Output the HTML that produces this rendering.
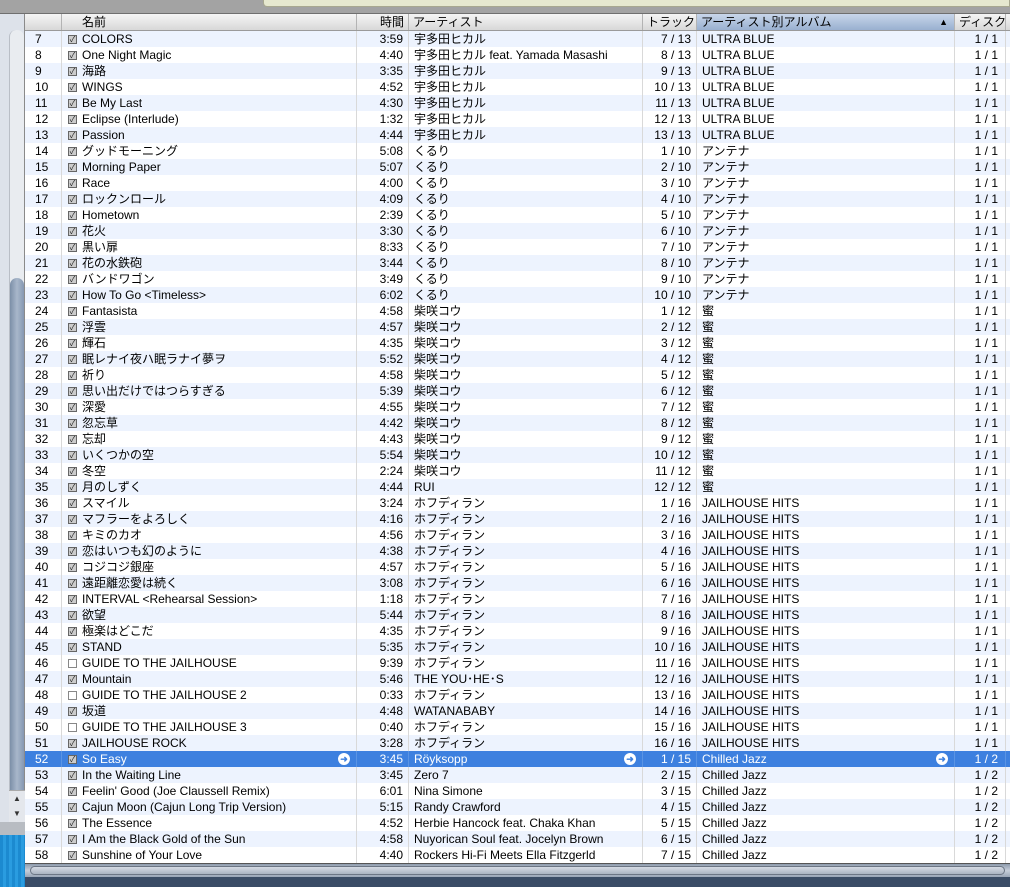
<!DOCTYPE html><html><head><meta charset="utf-8"><style>
*{margin:0;padding:0;box-sizing:border-box}
body{width:1010px;height:887px;overflow:hidden;background:#fff;font-family:"Liberation Sans","Noto Sans CJK JP",sans-serif;font-size:12px;color:#000;position:relative}
#top{position:absolute;left:0;top:0;width:1010px;height:14px;background:#a3a3a3;border-bottom:1px solid #6f6f6f}
#yel{position:absolute;left:263px;top:0;width:747px;height:7px;background:#e6e8cf;border:1px solid #a8a890;border-top:none;border-radius:0 0 0 4px}
#side{position:absolute;left:0;top:14px;width:25px;height:820px;background:#dde2ea;border-right:1px solid #8a8a8a}
#track{position:absolute;left:9px;top:16px;width:15px;height:775px;background:#e9ecf0;border-left:1px solid #b9bec6;border-radius:7px 7px 0 0}
#thumb{position:absolute;left:10px;top:264px;width:14px;height:528px;background:linear-gradient(90deg,#7c8fa8,#a8b7ca,#8598b2);border-radius:7px}
#arr{position:absolute;left:9px;top:790px;width:16px;height:32px;background:#e4e7ec;border-top:1px solid #aaa;font-size:8px;color:#333;text-align:center;line-height:15px}
#sbar{position:absolute;left:0;top:822px;width:25px;height:13px;background:#b8bcc2}
#blue{position:absolute;left:0;top:835px;width:25px;height:52px;background:repeating-linear-gradient(90deg,#1c8ad0 0 3px,#2a9ce0 3px 6px)}
#hdr{position:absolute;left:25px;top:14px;width:985px;height:17px;background:linear-gradient(#f5f5f5,#d8d8d8);border-bottom:1px solid #9a9a9a;display:flex}
#hdr div{height:16px;line-height:16px;border-right:1px solid #b3b3b3;padding:0 4px;white-space:nowrap;overflow:hidden}
#rows{position:absolute;left:25px;top:31px;width:985px}
.r{height:16px;line-height:16px;display:flex;white-space:nowrap}
.r:nth-child(odd){background:#edf3fe}
.r>div{height:16px;border-right:1px solid #d9d9d9;overflow:hidden;padding:0 4px;position:relative}
.r.s{background:#3d80df!important;color:#fff}
.r.s>div{border-right-color:#5a94e4}
.c1{width:37px;padding-left:10px!important}
.c2{width:295px;padding-left:6px!important}
.c3{width:52px;text-align:right;padding-right:5px!important}
.c4{width:234px;padding-left:5px!important}
.c5{width:54px;text-align:right;padding-right:5px!important}
.c6{width:258px;padding-left:5px!important}
.c7{width:51px;text-align:right;padding-right:7px!important}
.cb{display:inline-block;width:9px;height:9px;border:1px solid #666;background:#ccc;vertical-align:0;margin-right:5px;font-size:8px;line-height:7px;text-align:center;color:#222;position:relative;top:-1px}
.cb.u{background:#fff;color:transparent;border-color:#888}
.go{position:absolute;right:6px;top:2px;width:12px;height:12px;border-radius:6px;background:#fff;color:#3d80df;font-size:9px;line-height:12px;text-align:center;font-weight:bold}
#hs{position:absolute;left:25px;top:863px;width:985px;height:14px;background:linear-gradient(#8e9bad,#c6ceda,#98a5b6);border-top:1px solid #555}
#hs div{position:absolute;left:5px;top:2px;width:975px;height:9px;border-radius:5px;background:linear-gradient(#d5dbe4,#aab4c2);border:1px solid #6c7685}
#bot{position:absolute;left:25px;top:877px;width:985px;height:10px;background:#3a4c66}
</style></head><body>
<div id="top"><div id="yel"></div></div>
<div id="side"><div id="track"></div><div id="thumb"></div></div>
<div id="arr" style="position:absolute">▲<br>▼</div>
<div id="sbar"></div><div id="blue"></div>
<div id="hdr"><div style="width:37px"></div><div style="width:295px;padding-left:20px">名前</div><div style="width:52px;text-align:right">時間</div><div style="width:234px">アーティスト</div><div style="width:54px;text-align:right">トラック</div><div style="width:258px;background:linear-gradient(#c8d6ea,#99b0d0);position:relative">アーティスト別アルバム<span style="position:absolute;right:6px;font-size:9px">▲</span></div><div style="width:51px;text-align:right">ディスク</div></div>
<div id="rows">
<div class="r"><div class="c1">7</div><div class="c2"><span class="cb">✓</span>COLORS</div><div class="c3">3:59</div><div class="c4">宇多田ヒカル</div><div class="c5">7 / 13</div><div class="c6">ULTRA BLUE</div><div class="c7">1 / 1</div></div>
<div class="r"><div class="c1">8</div><div class="c2"><span class="cb">✓</span>One Night Magic</div><div class="c3">4:40</div><div class="c4">宇多田ヒカル feat. Yamada Masashi</div><div class="c5">8 / 13</div><div class="c6">ULTRA BLUE</div><div class="c7">1 / 1</div></div>
<div class="r"><div class="c1">9</div><div class="c2"><span class="cb">✓</span>海路</div><div class="c3">3:35</div><div class="c4">宇多田ヒカル</div><div class="c5">9 / 13</div><div class="c6">ULTRA BLUE</div><div class="c7">1 / 1</div></div>
<div class="r"><div class="c1">10</div><div class="c2"><span class="cb">✓</span>WINGS</div><div class="c3">4:52</div><div class="c4">宇多田ヒカル</div><div class="c5">10 / 13</div><div class="c6">ULTRA BLUE</div><div class="c7">1 / 1</div></div>
<div class="r"><div class="c1">11</div><div class="c2"><span class="cb">✓</span>Be My Last</div><div class="c3">4:30</div><div class="c4">宇多田ヒカル</div><div class="c5">11 / 13</div><div class="c6">ULTRA BLUE</div><div class="c7">1 / 1</div></div>
<div class="r"><div class="c1">12</div><div class="c2"><span class="cb">✓</span>Eclipse (Interlude)</div><div class="c3">1:32</div><div class="c4">宇多田ヒカル</div><div class="c5">12 / 13</div><div class="c6">ULTRA BLUE</div><div class="c7">1 / 1</div></div>
<div class="r"><div class="c1">13</div><div class="c2"><span class="cb">✓</span>Passion</div><div class="c3">4:44</div><div class="c4">宇多田ヒカル</div><div class="c5">13 / 13</div><div class="c6">ULTRA BLUE</div><div class="c7">1 / 1</div></div>
<div class="r"><div class="c1">14</div><div class="c2"><span class="cb">✓</span>グッドモーニング</div><div class="c3">5:08</div><div class="c4">くるり</div><div class="c5">1 / 10</div><div class="c6">アンテナ</div><div class="c7">1 / 1</div></div>
<div class="r"><div class="c1">15</div><div class="c2"><span class="cb">✓</span>Morning Paper</div><div class="c3">5:07</div><div class="c4">くるり</div><div class="c5">2 / 10</div><div class="c6">アンテナ</div><div class="c7">1 / 1</div></div>
<div class="r"><div class="c1">16</div><div class="c2"><span class="cb">✓</span>Race</div><div class="c3">4:00</div><div class="c4">くるり</div><div class="c5">3 / 10</div><div class="c6">アンテナ</div><div class="c7">1 / 1</div></div>
<div class="r"><div class="c1">17</div><div class="c2"><span class="cb">✓</span>ロックンロール</div><div class="c3">4:09</div><div class="c4">くるり</div><div class="c5">4 / 10</div><div class="c6">アンテナ</div><div class="c7">1 / 1</div></div>
<div class="r"><div class="c1">18</div><div class="c2"><span class="cb">✓</span>Hometown</div><div class="c3">2:39</div><div class="c4">くるり</div><div class="c5">5 / 10</div><div class="c6">アンテナ</div><div class="c7">1 / 1</div></div>
<div class="r"><div class="c1">19</div><div class="c2"><span class="cb">✓</span>花火</div><div class="c3">3:30</div><div class="c4">くるり</div><div class="c5">6 / 10</div><div class="c6">アンテナ</div><div class="c7">1 / 1</div></div>
<div class="r"><div class="c1">20</div><div class="c2"><span class="cb">✓</span>黒い扉</div><div class="c3">8:33</div><div class="c4">くるり</div><div class="c5">7 / 10</div><div class="c6">アンテナ</div><div class="c7">1 / 1</div></div>
<div class="r"><div class="c1">21</div><div class="c2"><span class="cb">✓</span>花の水鉄砲</div><div class="c3">3:44</div><div class="c4">くるり</div><div class="c5">8 / 10</div><div class="c6">アンテナ</div><div class="c7">1 / 1</div></div>
<div class="r"><div class="c1">22</div><div class="c2"><span class="cb">✓</span>バンドワゴン</div><div class="c3">3:49</div><div class="c4">くるり</div><div class="c5">9 / 10</div><div class="c6">アンテナ</div><div class="c7">1 / 1</div></div>
<div class="r"><div class="c1">23</div><div class="c2"><span class="cb">✓</span>How To Go &lt;Timeless&gt;</div><div class="c3">6:02</div><div class="c4">くるり</div><div class="c5">10 / 10</div><div class="c6">アンテナ</div><div class="c7">1 / 1</div></div>
<div class="r"><div class="c1">24</div><div class="c2"><span class="cb">✓</span>Fantasista</div><div class="c3">4:58</div><div class="c4">柴咲コウ</div><div class="c5">1 / 12</div><div class="c6">蜜</div><div class="c7">1 / 1</div></div>
<div class="r"><div class="c1">25</div><div class="c2"><span class="cb">✓</span>浮雲</div><div class="c3">4:57</div><div class="c4">柴咲コウ</div><div class="c5">2 / 12</div><div class="c6">蜜</div><div class="c7">1 / 1</div></div>
<div class="r"><div class="c1">26</div><div class="c2"><span class="cb">✓</span>輝石</div><div class="c3">4:35</div><div class="c4">柴咲コウ</div><div class="c5">3 / 12</div><div class="c6">蜜</div><div class="c7">1 / 1</div></div>
<div class="r"><div class="c1">27</div><div class="c2"><span class="cb">✓</span>眠レナイ夜ハ眠ラナイ夢ヲ</div><div class="c3">5:52</div><div class="c4">柴咲コウ</div><div class="c5">4 / 12</div><div class="c6">蜜</div><div class="c7">1 / 1</div></div>
<div class="r"><div class="c1">28</div><div class="c2"><span class="cb">✓</span>祈り</div><div class="c3">4:58</div><div class="c4">柴咲コウ</div><div class="c5">5 / 12</div><div class="c6">蜜</div><div class="c7">1 / 1</div></div>
<div class="r"><div class="c1">29</div><div class="c2"><span class="cb">✓</span>思い出だけではつらすぎる</div><div class="c3">5:39</div><div class="c4">柴咲コウ</div><div class="c5">6 / 12</div><div class="c6">蜜</div><div class="c7">1 / 1</div></div>
<div class="r"><div class="c1">30</div><div class="c2"><span class="cb">✓</span>深愛</div><div class="c3">4:55</div><div class="c4">柴咲コウ</div><div class="c5">7 / 12</div><div class="c6">蜜</div><div class="c7">1 / 1</div></div>
<div class="r"><div class="c1">31</div><div class="c2"><span class="cb">✓</span>忽忘草</div><div class="c3">4:42</div><div class="c4">柴咲コウ</div><div class="c5">8 / 12</div><div class="c6">蜜</div><div class="c7">1 / 1</div></div>
<div class="r"><div class="c1">32</div><div class="c2"><span class="cb">✓</span>忘却</div><div class="c3">4:43</div><div class="c4">柴咲コウ</div><div class="c5">9 / 12</div><div class="c6">蜜</div><div class="c7">1 / 1</div></div>
<div class="r"><div class="c1">33</div><div class="c2"><span class="cb">✓</span>いくつかの空</div><div class="c3">5:54</div><div class="c4">柴咲コウ</div><div class="c5">10 / 12</div><div class="c6">蜜</div><div class="c7">1 / 1</div></div>
<div class="r"><div class="c1">34</div><div class="c2"><span class="cb">✓</span>冬空</div><div class="c3">2:24</div><div class="c4">柴咲コウ</div><div class="c5">11 / 12</div><div class="c6">蜜</div><div class="c7">1 / 1</div></div>
<div class="r"><div class="c1">35</div><div class="c2"><span class="cb">✓</span>月のしずく</div><div class="c3">4:44</div><div class="c4">RUI</div><div class="c5">12 / 12</div><div class="c6">蜜</div><div class="c7">1 / 1</div></div>
<div class="r"><div class="c1">36</div><div class="c2"><span class="cb">✓</span>スマイル</div><div class="c3">3:24</div><div class="c4">ホフディラン</div><div class="c5">1 / 16</div><div class="c6">JAILHOUSE HITS</div><div class="c7">1 / 1</div></div>
<div class="r"><div class="c1">37</div><div class="c2"><span class="cb">✓</span>マフラーをよろしく</div><div class="c3">4:16</div><div class="c4">ホフディラン</div><div class="c5">2 / 16</div><div class="c6">JAILHOUSE HITS</div><div class="c7">1 / 1</div></div>
<div class="r"><div class="c1">38</div><div class="c2"><span class="cb">✓</span>キミのカオ</div><div class="c3">4:56</div><div class="c4">ホフディラン</div><div class="c5">3 / 16</div><div class="c6">JAILHOUSE HITS</div><div class="c7">1 / 1</div></div>
<div class="r"><div class="c1">39</div><div class="c2"><span class="cb">✓</span>恋はいつも幻のように</div><div class="c3">4:38</div><div class="c4">ホフディラン</div><div class="c5">4 / 16</div><div class="c6">JAILHOUSE HITS</div><div class="c7">1 / 1</div></div>
<div class="r"><div class="c1">40</div><div class="c2"><span class="cb">✓</span>コジコジ銀座</div><div class="c3">4:57</div><div class="c4">ホフディラン</div><div class="c5">5 / 16</div><div class="c6">JAILHOUSE HITS</div><div class="c7">1 / 1</div></div>
<div class="r"><div class="c1">41</div><div class="c2"><span class="cb">✓</span>遠距離恋愛は続く</div><div class="c3">3:08</div><div class="c4">ホフディラン</div><div class="c5">6 / 16</div><div class="c6">JAILHOUSE HITS</div><div class="c7">1 / 1</div></div>
<div class="r"><div class="c1">42</div><div class="c2"><span class="cb">✓</span>INTERVAL &lt;Rehearsal Session&gt;</div><div class="c3">1:18</div><div class="c4">ホフディラン</div><div class="c5">7 / 16</div><div class="c6">JAILHOUSE HITS</div><div class="c7">1 / 1</div></div>
<div class="r"><div class="c1">43</div><div class="c2"><span class="cb">✓</span>欲望</div><div class="c3">5:44</div><div class="c4">ホフディラン</div><div class="c5">8 / 16</div><div class="c6">JAILHOUSE HITS</div><div class="c7">1 / 1</div></div>
<div class="r"><div class="c1">44</div><div class="c2"><span class="cb">✓</span>極楽はどこだ</div><div class="c3">4:35</div><div class="c4">ホフディラン</div><div class="c5">9 / 16</div><div class="c6">JAILHOUSE HITS</div><div class="c7">1 / 1</div></div>
<div class="r"><div class="c1">45</div><div class="c2"><span class="cb">✓</span>STAND</div><div class="c3">5:35</div><div class="c4">ホフディラン</div><div class="c5">10 / 16</div><div class="c6">JAILHOUSE HITS</div><div class="c7">1 / 1</div></div>
<div class="r"><div class="c1">46</div><div class="c2"><span class="cb u">✓</span>GUIDE TO THE JAILHOUSE</div><div class="c3">9:39</div><div class="c4">ホフディラン</div><div class="c5">11 / 16</div><div class="c6">JAILHOUSE HITS</div><div class="c7">1 / 1</div></div>
<div class="r"><div class="c1">47</div><div class="c2"><span class="cb">✓</span>Mountain</div><div class="c3">5:46</div><div class="c4">THE YOU･HE･S</div><div class="c5">12 / 16</div><div class="c6">JAILHOUSE HITS</div><div class="c7">1 / 1</div></div>
<div class="r"><div class="c1">48</div><div class="c2"><span class="cb u">✓</span>GUIDE TO THE JAILHOUSE 2</div><div class="c3">0:33</div><div class="c4">ホフディラン</div><div class="c5">13 / 16</div><div class="c6">JAILHOUSE HITS</div><div class="c7">1 / 1</div></div>
<div class="r"><div class="c1">49</div><div class="c2"><span class="cb">✓</span>坂道</div><div class="c3">4:48</div><div class="c4">WATANABABY</div><div class="c5">14 / 16</div><div class="c6">JAILHOUSE HITS</div><div class="c7">1 / 1</div></div>
<div class="r"><div class="c1">50</div><div class="c2"><span class="cb u">✓</span>GUIDE TO THE JAILHOUSE 3</div><div class="c3">0:40</div><div class="c4">ホフディラン</div><div class="c5">15 / 16</div><div class="c6">JAILHOUSE HITS</div><div class="c7">1 / 1</div></div>
<div class="r"><div class="c1">51</div><div class="c2"><span class="cb">✓</span>JAILHOUSE ROCK</div><div class="c3">3:28</div><div class="c4">ホフディラン</div><div class="c5">16 / 16</div><div class="c6">JAILHOUSE HITS</div><div class="c7">1 / 1</div></div>
<div class="r s"><div class="c1">52</div><div class="c2"><span class="cb">✓</span>So Easy<span class="go">➜</span></div><div class="c3">3:45</div><div class="c4">Röyksopp<span class="go">➜</span></div><div class="c5">1 / 15</div><div class="c6">Chilled Jazz<span class="go">➜</span></div><div class="c7">1 / 2</div></div>
<div class="r"><div class="c1">53</div><div class="c2"><span class="cb">✓</span>In the Waiting Line</div><div class="c3">3:45</div><div class="c4">Zero 7</div><div class="c5">2 / 15</div><div class="c6">Chilled Jazz</div><div class="c7">1 / 2</div></div>
<div class="r"><div class="c1">54</div><div class="c2"><span class="cb">✓</span>Feelin' Good (Joe Claussell Remix)</div><div class="c3">6:01</div><div class="c4">Nina Simone</div><div class="c5">3 / 15</div><div class="c6">Chilled Jazz</div><div class="c7">1 / 2</div></div>
<div class="r"><div class="c1">55</div><div class="c2"><span class="cb">✓</span>Cajun Moon (Cajun Long Trip Version)</div><div class="c3">5:15</div><div class="c4">Randy Crawford</div><div class="c5">4 / 15</div><div class="c6">Chilled Jazz</div><div class="c7">1 / 2</div></div>
<div class="r"><div class="c1">56</div><div class="c2"><span class="cb">✓</span>The Essence</div><div class="c3">4:52</div><div class="c4">Herbie Hancock feat. Chaka Khan</div><div class="c5">5 / 15</div><div class="c6">Chilled Jazz</div><div class="c7">1 / 2</div></div>
<div class="r"><div class="c1">57</div><div class="c2"><span class="cb">✓</span>I Am the Black Gold of the Sun</div><div class="c3">4:58</div><div class="c4">Nuyorican Soul feat. Jocelyn Brown</div><div class="c5">6 / 15</div><div class="c6">Chilled Jazz</div><div class="c7">1 / 2</div></div>
<div class="r"><div class="c1">58</div><div class="c2"><span class="cb">✓</span>Sunshine of Your Love</div><div class="c3">4:40</div><div class="c4">Rockers Hi-Fi Meets Ella Fitzgerld</div><div class="c5">7 / 15</div><div class="c6">Chilled Jazz</div><div class="c7">1 / 2</div></div>
</div>
<div id="hs"><div></div></div>
<div id="bot"></div>
</body></html>
